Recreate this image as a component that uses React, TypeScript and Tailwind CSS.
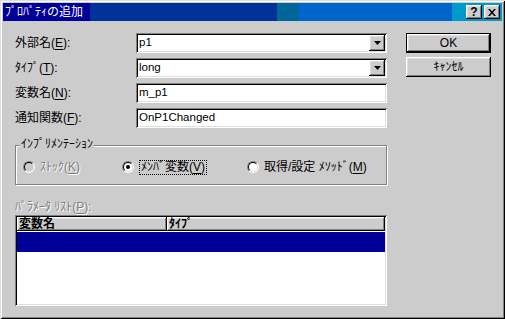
import React from 'react';

const FONT = '"Liberation Sans","Noto Sans CJK JP",sans-serif';

const sunken =
  'shadow-[inset_1px_1px_0_#808080,inset_-1px_-1px_0_#ffffff,inset_2px_2px_0_#000000,inset_-2px_-2px_0_#dfdfdf]';
const raised =
  'shadow-[inset_-1px_-1px_0_#000000,inset_1px_1px_0_#ffffff,inset_-2px_-2px_0_#808080,inset_2px_2px_0_#dfdfdf]';

function Mn({ children }: { children: React.ReactNode }) {
  return <span className="underline underline-offset-2">{children}</span>;
}

function DropArrow() {
  return (
    <div className={`w-4 h-4 bg-[#cccccc] flex items-center justify-center ${raised}`}>
      <svg width="7" height="4" viewBox="0 0 7 4">
        <path d="M0 0h7L3.5 4z" fill="#000" />
      </svg>
    </div>
  );
}

function Field({ label, value, combo }: { label: React.ReactNode; value: string; combo?: boolean }) {
  return (
    <div className="flex items-center h-5">
      <div className="w-[121px] text-[12px] text-black">{label}</div>
      <div className={`flex-1 h-5 bg-white flex items-center pl-[3px] pr-[2px] ${sunken}`}>
        <span className="flex-1 text-[11.5px] text-black leading-none">{value}</span>
        {combo && <DropArrow />}
      </div>
    </div>
  );
}

function Radio({ checked, disabled }: { checked?: boolean; disabled?: boolean }) {
  return (
    <div className="w-3 h-3 rounded-full border border-t-[#808080] border-l-[#808080] border-b-white border-r-white">
      <div
        className={`w-full h-full rounded-full border border-t-black border-l-black border-b-[#dfdfdf] border-r-[#dfdfdf] flex items-center justify-center ${
          disabled ? 'bg-[#cccccc]' : 'bg-white'
        }`}
      >
        {checked && <div className="w-1 h-1 rounded-full bg-black" />}
      </div>
    </div>
  );
}

export default function App() {
  return (
    <div
      className="w-[505px] h-[319px] bg-[#cccccc] p-[3px] flex flex-col shadow-[inset_1px_1px_0_#dfdfdf,inset_-1px_-1px_0_#000000,inset_2px_2px_0_#ffffff,inset_-2px_-2px_0_#808080]"
      style={{ fontFamily: FONT }}
    >
      {/* title bar */}
      <div className="h-[18px] flex items-center pl-[2px] pr-[2px] bg-[linear-gradient(90deg,#000099_0,#000099_87px,#003399_87px,#003399_274px,#006699_274px,#006699_296px,#0066cc_296px,#0066cc_449px,#0099cc_449px)]">
        <span className="flex-1 text-white text-[12px] leading-none">ﾌﾟﾛﾊﾟﾃｨの追加</span>
        <div className={`w-4 h-[14px] bg-[#cccccc] flex items-center justify-center text-[12px] font-bold leading-none text-black ${raised}`}>
          ?
        </div>
        <div className={`ml-[2px] w-4 h-[14px] bg-[#cccccc] flex items-center justify-center ${raised}`}>
          <svg width="8" height="7" viewBox="0 0 8 7">
            <path d="M0 0h2l2 2.5L6 0h2L5 3.5 8 7H6L4 4.5 2 7H0l3-3.5z" fill="#000" />
          </svg>
        </div>
      </div>

      {/* body */}
      <div className="flex pl-3 pt-3 gap-[19px]">
        <div className="w-[372px] flex flex-col">
          <div className="flex flex-col gap-[5px]">
            <Field label={<>外部名(<Mn>E</Mn>):</>} value="p1" combo />
            <Field label={<>ﾀｲﾌﾟ(<Mn>T</Mn>):</>} value="long" combo />
            <Field label={<>変数名(<Mn>N</Mn>):</>} value="m_p1" />
            <Field label={<>通知関数(<Mn>F</Mn>):</>} value="OnP1Changed" />
          </div>

          {/* group box */}
          <div className="relative mt-[17px] h-10 border border-[#808080] shadow-[inset_1px_1px_0_#ffffff,1px_1px_0_#ffffff]">
            <span className="absolute -top-[8px] left-[4px] px-[1px] bg-[#cccccc] text-[12px] leading-none text-black">
              ｲﾝﾌﾟﾘﾒﾝﾃｰｼｮﾝ
            </span>
            <div className="flex items-center h-full pt-[4px] pl-[7px] text-[12px]">
              <div className="flex items-center gap-[5px] w-[99px]">
                <Radio disabled />
                <span className="text-[#808080] [text-shadow:1px_1px_0_#fff]">
                  ｽﾄｯｸ(<Mn>K</Mn>)
                </span>
              </div>
              <div className="flex items-center gap-[5px] w-[125px]">
                <Radio checked />
                <span className="text-black border border-dotted border-black px-[1px] leading-[13px]">
                  ﾒﾝﾊﾞ変数(<Mn>V</Mn>)
                </span>
              </div>
              <div className="flex items-center gap-[5px]">
                <Radio />
                <span className="text-black">
                  取得/設定 ﾒｿｯﾄﾞ(<Mn>M</Mn>)
                </span>
              </div>
            </div>
          </div>

          <div className="mt-[15px] text-[12px] leading-[14px] text-[#808080] [text-shadow:1px_1px_0_#fff]">
            ﾊﾟﾗﾒｰﾀ ﾘｽﾄ(<Mn>P</Mn>):
          </div>

          {/* list */}
          <div className={`mt-[1px] h-[91px] bg-white p-[2px] flex flex-col ${sunken}`}>
            <div className="flex h-[14px] text-[12px] font-bold leading-none text-black">
              <div className={`w-[150px] bg-[#cccccc] flex items-center pl-[2px] ${raised}`}>変数名</div>
              <div className={`flex-1 bg-[#cccccc] flex items-center pl-[2px] ${raised}`}>ﾀｲﾌﾟ</div>
            </div>
            <div className="h-5 mt-[1px] bg-[#000099]" />
          </div>
        </div>

        {/* buttons */}
        <div className="w-[85px] flex flex-col gap-[4px]">
          <div className="h-5 border border-black">
            <div className={`h-full bg-[#cccccc] flex items-center justify-center text-[12px] text-black ${raised}`}>
              OK
            </div>
          </div>
          <div className={`h-5 bg-[#cccccc] flex items-center justify-center text-[12px] text-black ${raised}`}>
            ｷｬﾝｾﾙ
          </div>
        </div>
      </div>
    </div>
  );
}
